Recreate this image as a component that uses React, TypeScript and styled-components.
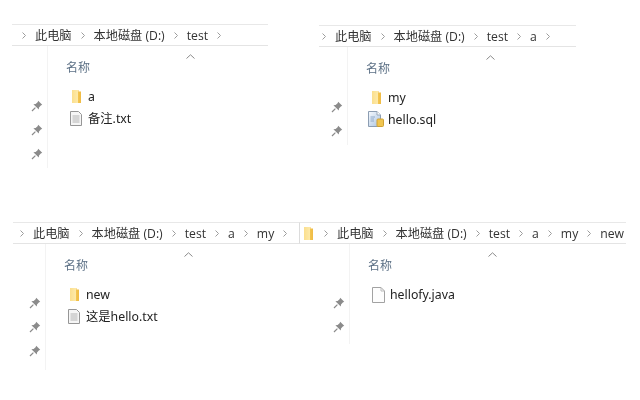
import React from "react";
import styled, { createGlobalStyle } from "styled-components";

const Global = createGlobalStyle`
  html, body { margin: 0; padding: 0; background: #fff; }
  body { width: 640px; height: 400px; overflow: hidden; font-family: "Noto Sans", "Noto Sans CJK SC", sans-serif; }
`;

const Page = styled.div`
  width: 640px;
  height: 400px;
  display: flex;
  flex-direction: column;
  filter: blur(0.35px);
`;

const Row = styled.div<{ $top: number; $height: number }>`
  display: flex;
  align-items: flex-start;
  padding-top: ${(p) => p.$top}px;
  height: ${(p) => p.$height}px;
  box-sizing: border-box;
`;

const Pane = styled.section<{ $left: number; $width: number; $drop: number }>`
  margin: ${(p) => p.$drop}px 0 0 ${(p) => p.$left}px;
  width: ${(p) => p.$width}px;
  flex: none;
`;

const Crumbs = styled.div<{ $boxed?: boolean; $pad: number }>`
  height: 22px;
  box-sizing: border-box;
  display: flex;
  align-items: center;
  gap: 8px;
  padding-left: ${(p) => p.$pad}px;
  border-top: 1px solid #e8e8e8;
  border-bottom: 1px solid #e4e4e4;
  border-left: ${(p) => (p.$boxed ? "1px solid #dcdcdc" : "none")};
  font-family: "Open Sans", "Noto Sans CJK SC", sans-serif;
  font-size: 12.2px;
  color: #333;
  white-space: nowrap;
  overflow: hidden;
`;

const Chevron = styled.svg`
  width: 6px;
  height: 9px;
  flex: none;
`;

const LeadFolder = styled.span`
  display: flex;
  flex: none;
  margin-right: 2px;
`;

const Body = styled.div`
  display: flex;
  align-items: flex-start;
`;

const Pins = styled.div<{ $offset: number; $rail: number; $height: number }>`
  width: ${(p) => p.$rail}px;
  height: ${(p) => p.$height}px;
  flex: none;
  box-sizing: border-box;
  border-right: 1px solid #f3f3f3;
  display: flex;
  flex-direction: column;
  align-items: flex-end;
  gap: 12px;
  padding: ${(p) => p.$offset}px 4px 0 0;
  overflow: hidden;
`;

const PinIcon = styled.svg`
  width: 12px;
  height: 12px;
  flex: none;
`;

const PinStub = styled.i`
  width: 2px;
  height: 1px;
  margin: 3px 5px 0 0;
  background: #b5b5b5;
  flex: none;
`;

const Main = styled.div`
  flex: 1;
  min-width: 0;
  display: flex;
  flex-direction: column;
`;

const Caret = styled.svg`
  width: 9px;
  height: 5px;
  margin: 8px 0 0 138px;
  flex: none;
`;

const Heading = styled.div`
  margin: 0 0 0 18px;
  height: 18px;
  line-height: 18px;
  font-size: 12px;
  color: #5d7186;
`;

const Items = styled.ul`
  list-style: none;
  margin: 9px 0 0;
  padding: 0 0 0 20px;
  display: flex;
  flex-direction: column;
`;

const Item = styled.li`
  height: 21.5px;
  display: flex;
  align-items: center;
  font-size: 12.3px;
  color: #222;
  white-space: nowrap;
`;

const IconSlot = styled.span`
  width: 16px;
  height: 16px;
  margin-right: 4px;
  flex: none;
  display: flex;
  align-items: center;
  justify-content: center;
`;

const Chev = () => (
  <Chevron viewBox="0 0 6 9">
    <path d="M1.5 1.5 L4.5 4.5 L1.5 7.5" fill="none" stroke="#9c9c9c" strokeWidth="1" />
  </Chevron>
);

const Folder = () => (
  <svg width="9" height="13" viewBox="0 0 9 13">
    <defs>
      <linearGradient id="fold" x1="0" x2="1" y1="0" y2="0">
        <stop offset="0" stopColor="#fbdf8e" />
        <stop offset="0.62" stopColor="#fde9a8" />
        <stop offset="0.7" stopColor="#f3c44f" />
        <stop offset="1" stopColor="#efbb45" />
      </linearGradient>
    </defs>
    <path d="M0 0 H6.5 V1.5 H9 V13 H0 Z" fill="url(#fold)" />
  </svg>
);

const TextDoc = () => (
  <svg width="12" height="15" viewBox="0 0 12 15">
    <path d="M.5.5 H8.5 L11.5 3.5 V14.5 H.5 Z" fill="#f6f6f6" stroke="#969696" />
    <path d="M2.5 5 H9.5 M2.5 7 H9.5 M2.5 9 H9.5 M2.5 11 H9.5" stroke="#b4b4b4" />
  </svg>
);

const SqlDoc = () => (
  <svg width="16" height="16" viewBox="0 0 16 16">
    <defs>
      <linearGradient id="sql" x1="0" x2="1" y1="0" y2="1">
        <stop offset="0" stopColor="#f7fafd" />
        <stop offset="1" stopColor="#a9c3e2" />
      </linearGradient>
    </defs>
    <path d="M.5.5 H9 L12.5 4 V15.5 H.5 Z" fill="url(#sql)" stroke="#8c9db2" />
    <path d="M9 .5 V4 H12.5" fill="#fff" stroke="#9aa8b8" />
    <rect x="9" y="8" width="6.5" height="7.5" rx="1" fill="#f0c550" stroke="#cfa235" />
    <path d="M2.5 6 H7 M2.5 8 H6 M2.5 10 H6" stroke="#8fa9c8" />
  </svg>
);

const BlankDoc = () => (
  <svg width="13" height="16" viewBox="0 0 13 16">
    <path d="M.5.5 H9 L12.5 4 V15.5 H.5 Z" fill="#fdfdfd" stroke="#a2a2a2" />
    <path d="M9 .5 V4 H12.5" fill="none" stroke="#bcbcbc" />
  </svg>
);

const Pin = () => (
  <PinIcon viewBox="0 0 12 12">
    <path d="M7.2 .8 L11.2 4.8 L9.8 5.4 L8 7.4 L7.8 9.6 L2.4 4.2 L4.6 4 L6.6 2.2 Z" fill="#8b8b8b" />
    <path d="M4.4 7.6 L1 11" stroke="#8b8b8b" strokeWidth="1.2" />
  </PinIcon>
);

type File = { name: string; icon: React.ReactNode };

type PaneData = {
  left: number;
  width: number;
  drop: number;
  pad: number;
  rail: number;
  railHeight: number;
  path: string[];
  trailing: boolean;
  boxed?: boolean;
  pins: number;
  stub?: boolean;
  pinOffset: number;
  files: File[];
};

const base = ["此电脑", "本地磁盘 (D:)", "test"];

const topRow: PaneData[] = [
  {
    left: 12,
    width: 256,
    drop: 0,
    pad: 9,
    rail: 36,
    railHeight: 122,
    path: base,
    trailing: true,
    pins: 3,
    pinOffset: 54,
    files: [
      { name: "a", icon: <Folder /> },
      { name: "备注.txt", icon: <TextDoc /> },
    ],
  },
  {
    left: 51,
    width: 257,
    drop: 1,
    pad: 2,
    rail: 29,
    railHeight: 98,
    path: [...base, "a"],
    trailing: true,
    pins: 2,
    pinOffset: 54,
    files: [
      { name: "my", icon: <Folder /> },
      { name: "hello.sql", icon: <SqlDoc /> },
    ],
  },
];

const bottomRow: PaneData[] = [
  {
    left: 13,
    width: 286,
    drop: 0,
    pad: 6,
    rail: 33,
    railHeight: 126,
    path: [...base, "a", "my"],
    trailing: true,
    pins: 3,
    stub: true,
    pinOffset: 53,
    files: [
      { name: "new", icon: <Folder /> },
      { name: "这是hello.txt", icon: <TextDoc /> },
    ],
  },
  {
    left: 0,
    width: 327,
    drop: 0,
    pad: 4,
    rail: 51,
    railHeight: 100,
    path: [...base, "a", "my", "new"],
    trailing: false,
    boxed: true,
    pins: 2,
    pinOffset: 53,
    files: [{ name: "hellofy.java", icon: <BlankDoc /> }],
  },
];

const Explorer = ({ data }: { data: PaneData }) => (
  <Pane $left={data.left} $width={data.width} $drop={data.drop}>
    <Crumbs $boxed={data.boxed} $pad={data.pad}>
      {data.boxed && (
        <LeadFolder>
          <Folder />
        </LeadFolder>
      )}
      {data.path.map((p) => (
        <React.Fragment key={p}>
          <Chev />
          <span>{p}</span>
        </React.Fragment>
      ))}
      {data.trailing && <Chev />}
    </Crumbs>
    <Body>
      <Pins $offset={data.pinOffset} $rail={data.rail} $height={data.railHeight}>
        {Array.from({ length: data.pins }, (_, i) => (
          <Pin key={i} />
        ))}
        {data.stub && <PinStub />}
      </Pins>
      <Main>
        <Caret viewBox="0 0 9 5">
          <path d="M.5 4.5 L4.5 .8 L8.5 4.5" fill="none" stroke="#8a8a8a" />
        </Caret>
        <Heading>名称</Heading>
        <Items>
          {data.files.map((f) => (
            <Item key={f.name}>
              <IconSlot>{f.icon}</IconSlot>
              {f.name}
            </Item>
          ))}
        </Items>
      </Main>
    </Body>
  </Pane>
);

export default function App() {
  return (
    <Page>
      <Global />
      <Row $top={24} $height={222}>
        {topRow.map((d) => (
          <Explorer key={d.path.join("/")} data={d} />
        ))}
      </Row>
      <Row $top={0} $height={178}>
        {bottomRow.map((d) => (
          <Explorer key={d.path.join("/")} data={d} />
        ))}
      </Row>
    </Page>
  );
}
